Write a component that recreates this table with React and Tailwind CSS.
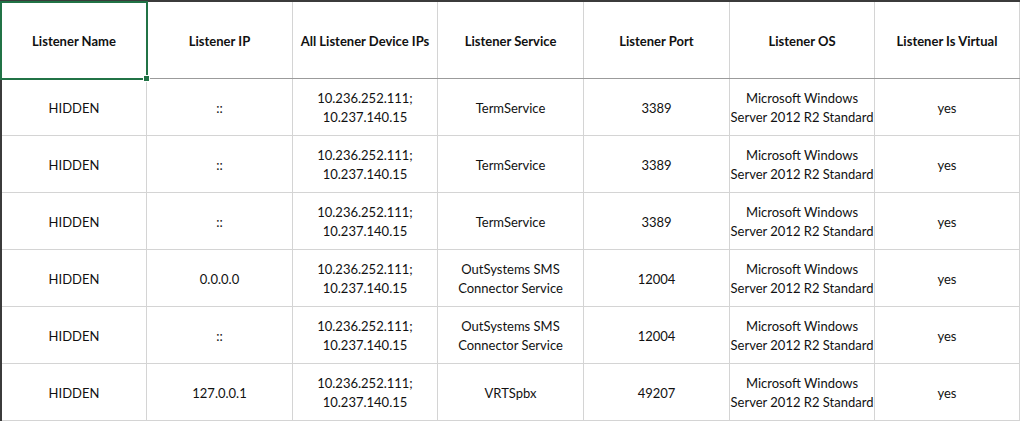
import React from "react";

const cols = [
  { label: "Listener Name", w: "w-[145px]" },
  { label: "Listener IP", w: "w-[146px]" },
  { label: "All Listener Device IPs", w: "w-[145px]" },
  { label: "Listener Service", w: "w-[146px]" },
  { label: "Listener Port", w: "w-[146px]" },
  { label: "Listener OS", w: "w-[145px]" },
  { label: "Listener Is Virtual", w: "w-[145px]" },
];

const ips = ["10.236.252.111;", "10.237.140.15"];
const os = ["Microsoft Windows", "Server 2012 R2 Standard"];
const sms = ["OutSystems SMS", "Connector Service"];

const rows = [
  ["HIDDEN", "::", ips, "TermService", "3389", os, "yes"],
  ["HIDDEN", "::", ips, "TermService", "3389", os, "yes"],
  ["HIDDEN", "::", ips, "TermService", "3389", os, "yes"],
  ["HIDDEN", "0.0.0.0", ips, sms, "12004", os, "yes"],
  ["HIDDEN", "::", ips, sms, "12004", os, "yes"],
  ["HIDDEN", "127.0.0.1", ips, "VRTSpbx", "49207", os, "yes"],
];

function Cell({ value, w }) {
  const lines = Array.isArray(value) ? value : [value];
  return (
    <div className={`${w} h-full shrink-0 border-r border-[#d4d4d4] flex flex-col items-center justify-center pt-[2px] text-center leading-[19px]`}>
      {lines.map((l, i) => (
        <span key={i}>{l}</span>
      ))}
    </div>
  );
}

export default function App() {
  return (
    <div
      className="relative w-[1024px] h-[422px] bg-white overflow-hidden text-[13px] text-[#111]"
      style={{ fontFamily: "Lato, 'Open Sans', sans-serif" }}
    >
      <div className="w-[1020px] border-t-2 border-l-2 border-t-[#3b3b3b] border-l-[#3b3b3b]">
        {/* header */}
        <div className="flex h-[77px] border-b border-[#9b9b9b] font-bold">
          {cols.map((c) => (
            <Cell key={c.label} value={c.label} w={c.w} />
          ))}
        </div>
        {rows.map((r, i) => (
          <div key={i} className="flex h-[57px] border-b border-[#d4d4d4]">
            {r.map((v, j) => (
              <Cell key={j} value={v} w={cols[j].w} />
            ))}
          </div>
        ))}
      </div>

      {/* active cell selection */}
      <div className="absolute left-0 top-[1px] w-[148px] h-[79px] border-2 border-[#217346]" />
      <div className="absolute left-[143px] top-[75px] w-[7px] h-[7px] bg-[#217346] border border-white" />
    </div>
  );
}
